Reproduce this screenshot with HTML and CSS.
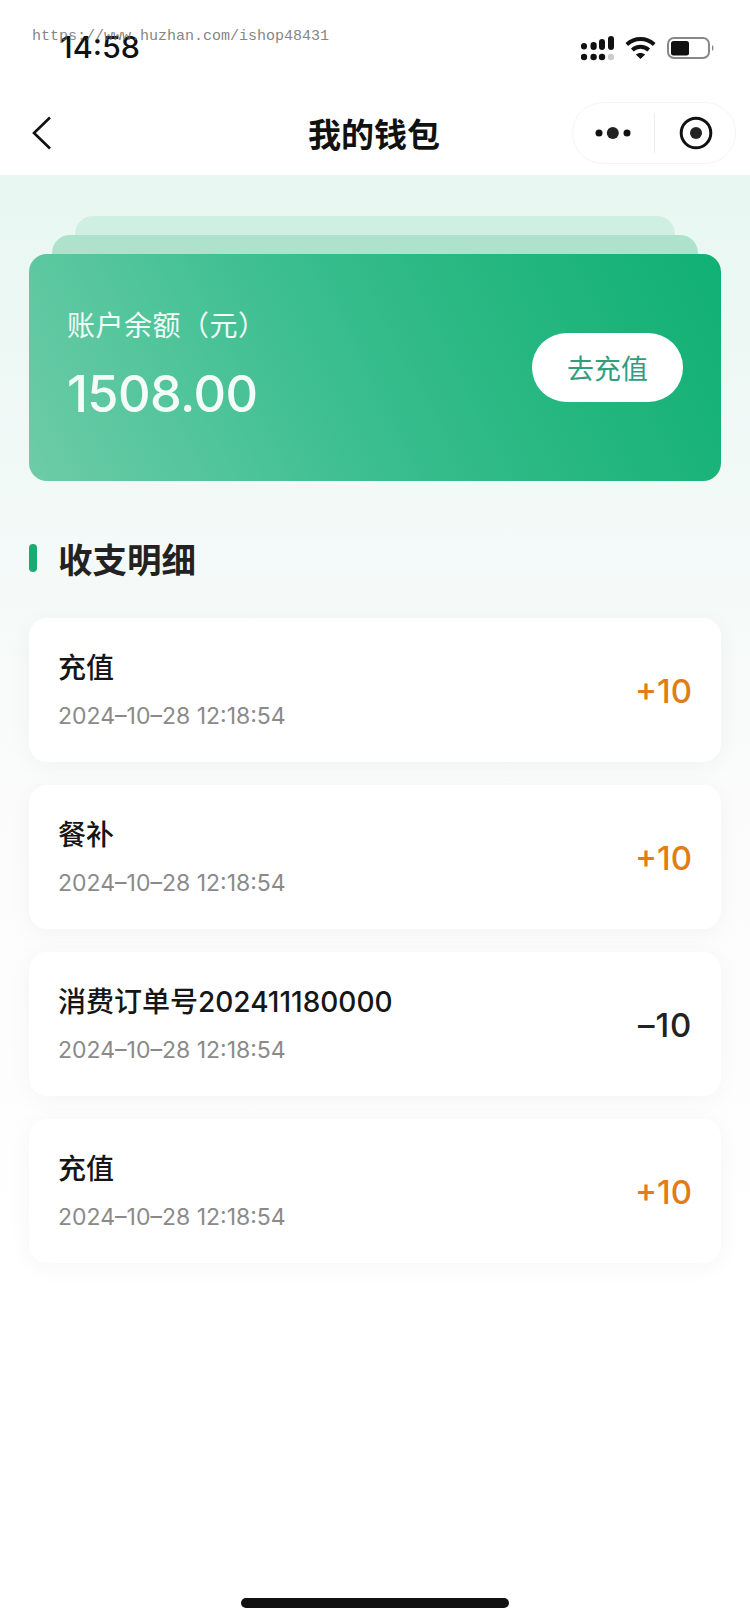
FILE: index.html
```html
<!DOCTYPE html>
<html lang="zh-CN">
<head>
<meta charset="utf-8">
<title>我的钱包</title>
<link rel="stylesheet" href="styles.css">
</head>
<body>
<div class="page">
  <header class="top">
    <div class="status">
      <span class="time">14:58</span>
      <div class="status-icons">
        <svg class="signal" width="33" height="25" viewBox="0 0 33 25">
          <g fill="#111">
            <rect x="0" y="7" width="6" height="6.500" rx="3"/><circle cx="3" cy="21" r="3.200"/>
            <rect x="9.500" y="6" width="6.200" height="8" rx="3"/><circle cx="12.600" cy="21" r="3.200"/>
            <rect x="18" y="3" width="6" height="11" rx="3"/><circle cx="21" cy="21" r="3.200"/>
            <rect x="27" y="0" width="6" height="14" rx="3"/>
          </g>
          <circle cx="30" cy="21" r="3.200" fill="#ccc"/>
        </svg>
        <svg class="wifi" width="31" height="22" viewBox="0 0 31 22">
          <path d="M1.800 7.500C10 .300 21 .300 29.200 7.500" fill="none" stroke="#111" stroke-width="4"/>
          <path d="M7.300 13C12 8.800 19 8.800 23.700 13" fill="none" stroke="#111" stroke-width="4"/>
          <path d="M10.800 17.600C13.500 15.400 17.500 15.400 20.200 17.600L15.500 22Z" fill="#111"/>
        </svg>
        <svg class="battery" width="47" height="22" viewBox="0 0 47 22">
          <rect x="1" y="1" width="41" height="20" rx="6" fill="none" stroke="#888" stroke-width="2"/>
          <rect x="4" y="4" width="18" height="14.500" rx="2.500" fill="#111"/>
          <path d="M45 8C47 9.500 47 12.500 45 14Z" fill="#888"/>
        </svg>
      </div>
    </div>
    <div class="nav">
      <button class="back" aria-label="返回">
        <svg width="20" height="34" viewBox="0 0 20 34"><path d="M18 1.500L2 17L18 32.500" fill="none" stroke="#111" stroke-width="2.600"/></svg>
      </button>
      <h1 class="nav-title">我的钱包</h1>
      <div class="capsule">
        <svg class="more" width="36" height="16" viewBox="0 0 36 16">
          <circle cx="4" cy="8" r="3.500" fill="#111"/><circle cx="17.800" cy="8" r="6" fill="#222"/><circle cx="32" cy="8" r="3.500" fill="#111"/>
        </svg>
        <span class="capsule-line"></span>
        <svg class="target" width="34" height="34" viewBox="0 0 34 34">
          <circle cx="17" cy="17" r="14.800" fill="none" stroke="#111" stroke-width="3"/><circle cx="17" cy="17" r="6" fill="#222"/>
        </svg>
      </div>
    </div>
  </header>

  <main class="content">
    <section class="wallet">
      <div class="layer layer-back"></div>
      <div class="layer layer-mid"></div>
      <div class="balance">
        <div class="balance-info">
          <p class="balance-label">账户余额（元）</p>
          <p class="balance-amount">1508.00</p>
        </div>
        <button class="recharge">去充值</button>
      </div>
    </section>

    <h2 class="section-title"><span class="section-mark"></span>收支明细</h2>

    <ul class="records">
      <li class="record">
        <div><p class="record-name">充值</p><p class="record-time">2024–10–28 12:18:54</p></div>
        <span class="record-value plus">+10</span>
      </li>
      <li class="record">
        <div><p class="record-name">餐补</p><p class="record-time">2024–10–28 12:18:54</p></div>
        <span class="record-value plus">+10</span>
      </li>
      <li class="record">
        <div><p class="record-name">消费订单号202411180000</p><p class="record-time">2024–10–28 12:18:54</p></div>
        <span class="record-value minus">–10</span>
      </li>
      <li class="record">
        <div><p class="record-name">充值</p><p class="record-time">2024–10–28 12:18:54</p></div>
        <span class="record-value plus">+10</span>
      </li>
    </ul>
  </main>

  <div class="home-bar"></div>
  <div class="watermark">https://www.huzhan.com/ishop48431</div>
</div>
</body>
</html>
```
FILE: styles.css
```css
* { box-sizing: border-box; }
html, body { margin: 0; padding: 0; }
body {
  width: 750px;
  height: 1624px;
  overflow: hidden;
  background: #fff;
  font-family: Inter, "Noto Sans CJK SC", sans-serif;
  color: #111;
}
p, h1, h2, ul { margin: 0; padding: 0; }
ul { list-style: none; }
button { border: 0; padding: 0; background: none; font: inherit; }

.page {
  position: relative;
  height: 1624px;
  display: flex;
  flex-direction: column;
}

.top { height: 175px; background: #fff; flex: none; }
.status {
  height: 88px;
  padding: 29px 36px 0 60px;
  display: flex;
  justify-content: space-between;
  align-items: flex-start;
}
.time { font-size: 30.5px; font-weight: 500; line-height: 36px; color: #111; }
.status-icons { display: flex; align-items: flex-start; gap: 11px; padding-top: 7px; }
.wifi, .battery { margin-top: 1px; }

.nav {
  height: 87px;
  display: grid;
  grid-template-columns: 1fr auto 1fr;
  align-items: center;
  padding: 3px 14px 0;
}
.back { display: flex; justify-self: start; margin-left: 18px; }
.nav-title {
  font-size: 33px;
  line-height: 44px;
  font-weight: 700;
  font-family: "Noto Sans CJK SC", sans-serif;
  margin-right: 2px;
}
.capsule {
  justify-self: end;
  width: 164px;
  height: 62px;
  border: 1px solid #f5f5f5;
  border-radius: 31px;
  display: flex;
  align-items: center;
  padding-left: 22px;
  background: #fff;
}
.capsule-line { width: 1px; height: 40px; background: #efefef; margin: 0 24px 0 23px; }

.content {
  flex: 1;
  padding: 41px 29px 0;
  background: linear-gradient(180deg, #e8f7f2 0, #f5faf9 420px, #fbfbfb 620px, #fff 1100px);
}

.wallet { display: flex; flex-direction: column; align-items: center; }
.layer { border-radius: 18px 18px 0 0; height: 19px; flex: none; }
.layer-back { width: 600px; background: #d0efe3; }
.layer-mid { width: 646px; background: #aee2cd; }
.balance {
  width: 692px;
  height: 227px;
  border-radius: 18px;
  background: linear-gradient(64deg, #6dcca8 0%, #3dbf91 42%, #2ab883 65%, #10b074 100%);
  display: flex;
  justify-content: space-between;
  align-items: center;
  padding: 0 38px;
  color: #fff;
}
.balance-info { padding-bottom: 5px; }
.balance-label {
  font-size: 28px;
  letter-spacing: .5px;
  line-height: 38px;
  font-family: "Noto Sans CJK SC", sans-serif;
  font-weight: 400;
  color: #f1fbf7;
  margin-bottom: 20px;
}
.balance-amount { font-size: 50.5px; line-height: 62px; font-weight: 500; letter-spacing: -.6px; color: #f4fcf9; }
.recharge {
  width: 151px;
  height: 69px;
  border-radius: 35px;
  background: #fff;
  color: #2f9e7c;
  font-size: 27px;
  font-family: "Noto Sans CJK SC", sans-serif;
}

.section-title {
  display: flex;
  align-items: center;
  margin: 55px 0 38px;
  height: 44px;
  font-size: 34.5px;
  line-height: 44px;
  font-weight: 700;
  font-family: "Noto Sans CJK SC", sans-serif;
  color: #222;
}
.section-mark { width: 8px; height: 28px; border-radius: 4px; background: #18ab72; margin-right: 21px; }

.records { display: flex; flex-direction: column; gap: 23px; }
.record {
  height: 144px;
  background: #fff;
  border-radius: 18px;
  box-shadow: 0 4px 24px rgba(0, 0, 0, .04);
  display: flex;
  justify-content: space-between;
  align-items: center;
  padding: 0 29px;
}
.record-name { font-size: 28px; line-height: 40px; font-weight: 500; color: #161616; margin-bottom: 12px; }
.record-time { font-size: 23px; line-height: 32px; color: #8a8a8a; }
.record-value { font-size: 33px; font-weight: 500; line-height: 40px; margin-top: 2px; }
.plus { color: #e07d16; }
.minus { color: #222; letter-spacing: .8px; }

.home-bar {
  position: absolute;
  left: 241px;
  top: 1598px;
  width: 268px;
  height: 10px;
  border-radius: 5px;
  background: #111;
}
.watermark {
  position: absolute;
  left: 32px;
  top: 28px;
  font-family: "Liberation Mono", monospace;
  font-size: 15px;
  line-height: 18px;
  color: rgba(100, 100, 100, .8);
}
```
